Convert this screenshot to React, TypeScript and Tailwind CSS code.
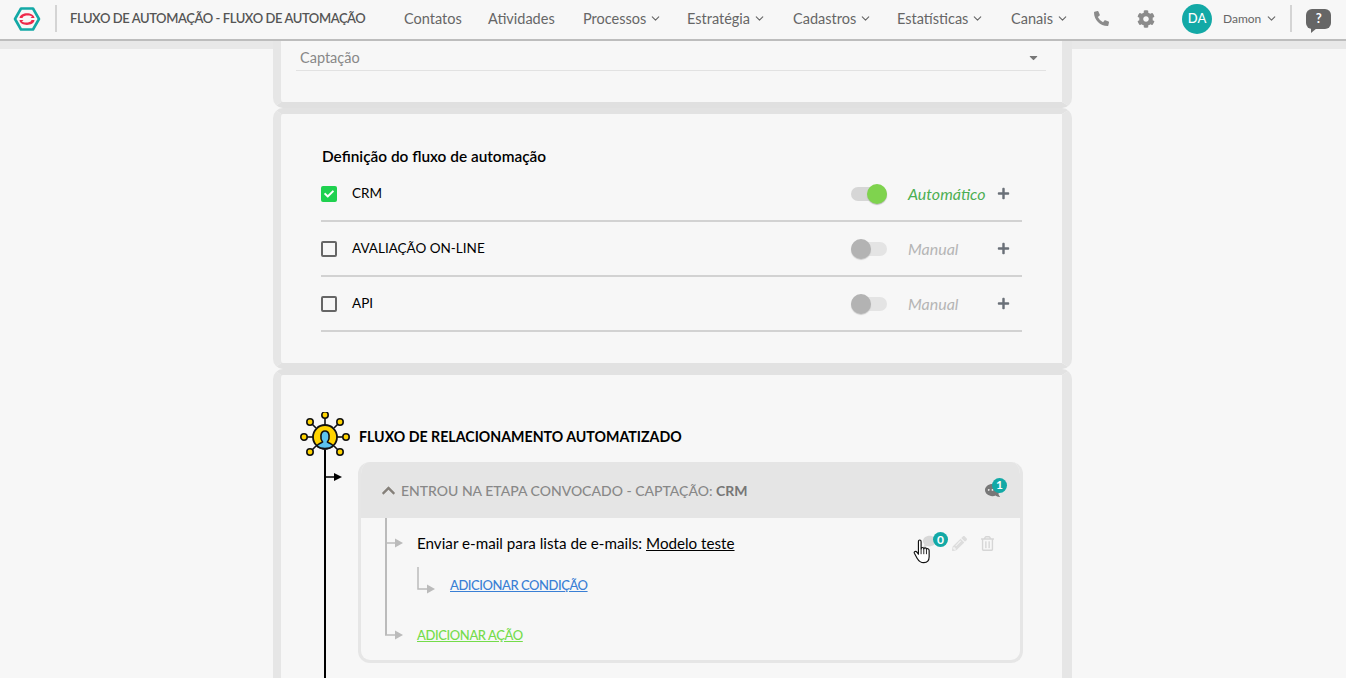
import React from "react";
import { FaPhoneAlt, FaCog, FaChevronUp, FaPlus, FaCaretDown, FaPencilAlt, FaRegTrashAlt, FaCommentDots, FaComment, FaCheck } from "react-icons/fa";
import { LuChevronDown } from "react-icons/lu";

function Logo() {
  return (
    <svg width="28" height="26" viewBox="0 0 28 26" fill="none">
      <path d="M8 2.5H20L26 13L20 23.5H8L2 13Z" fill="#f7f7f7" stroke="#13a9a6" strokeWidth="2.6" strokeLinejoin="round" />
      <path d="M6.5 12C7 5.5 21 5.5 21.5 12H17.5L19 10.5C17 9 11 9 9.5 11.5L10 12Z" fill="#ee2a4b" />
      <path d="M21.5 14C21 20.5 7 20.5 6.5 14H10.5L9 15.5C11 17 17 17 18.5 14.5L18 14Z" fill="#ee2a4b" />
    </svg>
  );
}

function HubIcon() {
  const nodes: [number, number, number, number][] = [
    [25, 5, 25, 15],
    [10, 12, 16, 18],
    [40, 12, 34, 18],
    [4, 27, 13, 27],
    [46, 27, 37, 27],
    [10, 42, 16, 36],
    [40, 42, 34, 36],
  ];
  return (
    <svg width="50" height="50" viewBox="0 2 50 50" fill="none" className="relative z-10">
      {nodes.map(([x, y, a, b], i) => (
        <g key={i}>
          <line x1={x} y1={y} x2={a} y2={b} stroke="#111" strokeWidth="1.6" />
          <circle cx={x} cy={y} r="3.2" fill="#ffd400" stroke="#111" strokeWidth="1.6" />
        </g>
      ))}
      <circle cx="25" cy="27" r="12" fill="#ffd400" stroke="#111" strokeWidth="1.8" />
      <path d="M17 36C18 33.5 21 33.5 22.5 32C20 29 20 21 25 21C30 21 30 29 27.5 32C29 33.5 32 33.5 33 36C29 39.5 21 39.5 17 36Z" fill="#5cc4ee" stroke="#111" strokeWidth="1.6" />
    </svg>
  );
}

function NavItem({ label, chevron, w }: { label: string; chevron?: boolean; w: string }) {
  return (
    <span className={`flex items-center gap-[3px] text-[14.5px] text-[#666] ${w}`}>
      {label}
      {chevron && <LuChevronDown size={13} className="text-[#666]" />}
    </span>
  );
}

function Toggle({ on }: { on: boolean }) {
  return on ? (
    <span className="flex h-[14px] w-[36px] items-center justify-end rounded-full bg-[#d6d6d6]">
      <span className="h-[20px] w-[20px] shrink-0 rounded-full bg-[#7fd34e] shadow-[0_1px_1px_#bbb]" />
    </span>
  ) : (
    <span className="flex h-[14px] w-[36px] items-center rounded-full bg-[#e4e4e4]">
      <span className="h-[20px] w-[20px] shrink-0 rounded-full bg-[#b3b3b3] shadow-[0_1px_1px_#ccc]" />
    </span>
  );
}

function ModeRow({ label, mode, on }: { label: string; mode: string; on?: boolean }) {
  return (
    <div className="flex h-[55px] items-center border-b-2 border-[#d2d2d2]">
      <span className={`flex h-[16px] w-[16px] items-center justify-center rounded-[2px] ${on ? "bg-[#1fd14f]" : "border-2 border-[#666]"}`}>
        {on && <FaCheck size={10} className="text-white" />}
      </span>
      <span className="ml-[15px] flex-1 text-[13.5px] text-black">{label}</span>
      <Toggle on={!!on} />
      <span className={`ml-[21px] w-[89px] text-[16px] italic ${on ? "text-[#4cae52]" : "text-[#b5b5b5]"}`}>{mode}</span>
      <FaPlus size={13} className="text-[#6a7078]" />
      <span className="w-[12px]" />
    </div>
  );
}

function Arrow() {
  return (
    <svg width="18" height="10" viewBox="0 0 18 10" className="shrink-0">
      <path d="M0 5H10" stroke="#bbb" strokeWidth="1.5" />
      <path d="M10 0.5L18 5L10 9.5Z" fill="#bbb" />
    </svg>
  );
}

export default function App() {
  return (
    <div className="flex h-[678px] w-[1346px] flex-col overflow-hidden bg-[#f7f7f7] font-['Lato','Noto_Sans',sans-serif]">
      <header className="z-0 flex h-[41px] shrink-0 items-center border-b-2 border-[#bdbdbd] bg-[#f7f7f7] pb-[2px] pl-[13px] shadow-[0_8px_0_#e8e8e8]">
        <Logo />
        <span className="ml-[14px] h-[27px] w-[2px] bg-[#d4d4d4]" />
        <span className="ml-[13px] w-[334px] whitespace-nowrap text-[13px] font-semibold tracking-[-0.42px] text-[#555]">FLUXO DE AUTOMAÇÃO - FLUXO DE AUTOMAÇÃO</span>
        <NavItem label="Contatos" w="w-[84px]" />
        <NavItem label="Atividades" w="w-[95px]" />
        <NavItem label="Processos" chevron w="w-[104px]" />
        <NavItem label="Estratégia" chevron w="w-[106px]" />
        <NavItem label="Cadastros" chevron w="w-[104px]" />
        <NavItem label="Estatísticas" chevron w="w-[114px]" />
        <NavItem label="Canais" chevron w="w-[83px]" />
        <FaPhoneAlt size={15} className="text-[#8b8b8b]" />
        <FaCog size={18} className="ml-[28px] text-[#8b8b8b]" />
        <span className="ml-[27px] flex h-[30px] w-[30px] items-center justify-center rounded-full bg-[#13a9a6] text-[13px] font-medium text-white">DA</span>
        <span className="ml-[11px] flex items-center gap-1 text-[12px] text-[#666]">
          Damon
          <LuChevronDown size={13} />
        </span>
        <span className="ml-[12px] h-[27px] w-[2px] bg-[#d4d4d4]" />
        <span className="relative ml-[14px] flex h-[20px] w-[25px] items-center justify-center rounded-[6px] bg-[#666] text-[13px] font-bold text-white">
          ?
          <span className="absolute -bottom-[4px] left-[5px] h-0 w-0 border-r-[6px] border-t-[5px] border-r-transparent border-t-[#666]" />
        </span>
      </header>

      <main className="z-10 ml-[273px] flex w-[799px] flex-col">
        <section className="flex h-[67px] shrink-0 flex-col rounded-b-[10px] border-b-[6px] border-l-[8px] border-r-[10px] border-x-[#e6e6e6] border-b-[#e0e0e0] bg-[#f7f7f7] pl-[15px] pr-[16px]">
          <div className="mt-[8px] flex h-[22px] items-center justify-between border-b border-[#e2e2e2] pb-[4px] pl-[4px] pr-[6px] text-[14.5px] text-[#888]">
            Captação
            <FaCaretDown size={13} className="text-[#777]" />
          </div>
        </section>

        <section className="flex h-[261px] shrink-0 flex-col rounded-[10px] border-y-[6px] border-l-[8px] border-r-[10px] border-x-[#e6e6e6] border-y-[#e2e2e2] bg-[#f7f7f7] pl-[40px] pr-[40px]">
          <h2 className="ml-[1px] mt-[33px] text-[15.4px] font-semibold leading-[18px] text-black">Definição do fluxo de automação</h2>
          <div className="mt-[2px] flex flex-col">
            <ModeRow label="CRM" mode="Automático" on />
            <ModeRow label="AVALIAÇÃO ON-LINE" mode="Manual" />
            <ModeRow label="API" mode="Manual" />
          </div>
        </section>

        <section className="flex h-[330px] shrink-0 flex-col rounded-[10px] border-l-[8px] border-r-[10px] border-t-[6px] border-x-[#e6e6e6] border-t-[#e2e2e2] bg-[#f7f7f7] pl-[19px]">
          <div className="mt-[37px] flex h-[50px] shrink-0 items-center">
            <HubIcon />
            <h2 className="ml-[9px] text-[14.2px] font-bold text-black">FLUXO DE RELACIONAMENTO AUTOMATIZADO</h2>
          </div>
          <div className="-mt-[12px] flex flex-1">
            <div className="relative ml-[24px] w-[2px] shrink-0 bg-black">
              <svg width="18" height="10" viewBox="0 0 18 10" className="absolute left-0 top-[22px]">
                <path d="M0 5H10" stroke="#000" strokeWidth="1.5" />
                <path d="M10 1L18 5L10 9Z" fill="#000" />
              </svg>
            </div>
            <div className="ml-[32px] mt-[12px] h-[201px] w-[665px] overflow-hidden rounded-[12px] border-x-[3px] border-b-[3px] border-[#e6e6e6]">
              <div className="relative flex h-[56px] items-center bg-[#e5e5e5] pl-[20px] pr-[18px]">
                <FaChevronUp size={15} className="text-[#85807a]" />
                <span className="ml-[5px] flex-1 text-[14px] font-medium text-[#888]">
                  ENTROU NA ETAPA CONVOCADO - CAPTAÇÃO: <b className="font-bold text-[#777]">CRM</b>
                </span>
                <span className="relative mr-[2px]">
                  <FaCommentDots size={15} className="scale-x-[-1] text-[#777]" />
                  <span className="absolute -right-[7px] -top-[5px] flex h-[15px] w-[15px] items-center justify-center rounded-full bg-[#13a9a6] text-[12px] font-bold text-white">1</span>
                </span>
              </div>
              <div className="relative flex flex-col pl-[24px]">
                <div className="absolute left-[24px] top-0 h-[117px] w-[2px] bg-[#bbb]" />
                <div className="flex h-[50px] items-center">
                  <Arrow />
                  <span className="ml-[14px] flex-1 text-[15.2px] text-black">
                    Enviar e-mail para lista de e-mails: <u>Modelo teste</u>
                  </span>
                  <span className="relative flex h-[16px] w-[16px] items-center justify-center">
                    <FaComment size={13} className="-translate-y-[2px] text-[#d8d8d8]" />
                    <span className="absolute -right-[11px] -top-[3px] flex h-[15px] w-[15px] items-center justify-center rounded-full bg-[#13a9a6] text-[12px] font-bold text-white">0</span>
                    <svg width="18" height="25" viewBox="0 0 20 28" className="absolute left-[-8px] top-[4px]">
                      <path d="M6 3C6 0.5 9 0.5 9 3V11C9.5 9 12 9 12 11C12.5 9.5 15 9.5 15 11.5C15.5 10.5 18 10.5 18 13V20C18 24 16 26.5 12 26.5C8 26.5 6.5 25 4.5 21.5L1.5 16C0.5 14 3 13 4.5 15L6 17Z" fill="#fff" stroke="#111" strokeWidth="1.3" strokeLinejoin="round" />
                      <path d="M9 11V17M12 11V17M15 11.5V17" stroke="#111" strokeWidth="1" />
                    </svg>
                  </span>
                  <FaPencilAlt size={15} className="ml-[15px] text-[#ddd]" />
                  <FaRegTrashAlt size={15} className="ml-[13px] mr-[25px] text-[#d6d6d6]" />
                </div>
                <div className="flex h-[33px] items-center pl-[32px]">
                  <svg width="18" height="27" viewBox="0 0 18 27" className="-mt-[9px] shrink-0">
                    <path d="M1 0V22H10" stroke="#bbb" strokeWidth="1.5" fill="none" />
                    <path d="M10 17.5L18 22L10 26.5Z" fill="#bbb" />
                  </svg>
                  <a className="ml-[15px] mt-[2px] whitespace-nowrap text-[13px] font-medium tracking-[-0.45px] text-[#3a7fd5] underline">ADICIONAR CONDIÇÃO</a>
                </div>
                <div className="mt-[25px] flex h-[18px] items-center">
                  <Arrow />
                  <a className="ml-[14px] mt-[2px] whitespace-nowrap text-[13px] font-medium tracking-[-0.4px] text-[#74dc4a] underline">ADICIONAR AÇÃO</a>
                </div>
              </div>
            </div>
          </div>
        </section>
      </main>
    </div>
  );
}
